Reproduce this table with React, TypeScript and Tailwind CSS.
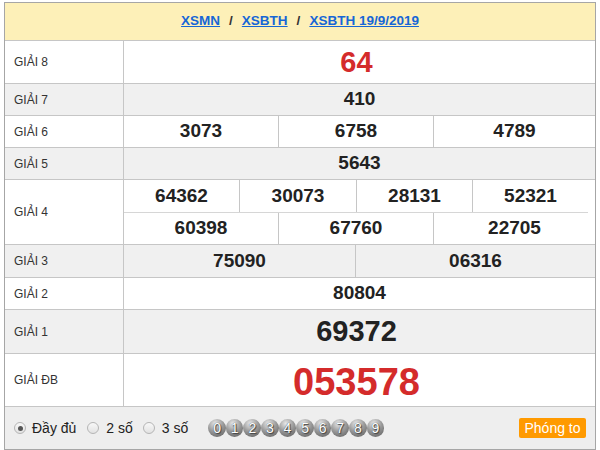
const font = "font-['Liberation_Sans',Arial,sans-serif]";

function Label({ text }: { text: string }) {
  return (
    <div className="w-[119px] shrink-0 border-r border-[#c6c6c6] pl-[9px] flex items-center text-[12px] text-[#333]">
      {text}
    </div>
  );
}

function Num({ v, className = "" }: { v: string; className?: string }) {
  return (
    <div className={`flex items-center justify-center text-[19px] font-bold text-[#222] ${className}`}>{v}</div>
  );
}

function Row({
  label,
  h,
  gray,
  children,
}: {
  label: string;
  h: string;
  gray?: boolean;
  children: React.ReactNode;
}) {
  return (
    <div className={`flex border-b border-[#c6c6c6] ${h} ${gray ? "bg-[#f0f0f0]" : "bg-white"}`}>
      <Label text={label} />
      <div className="flex-1 flex flex-col">{children}</div>
    </div>
  );
}

function Radio({ checked }: { checked?: boolean }) {
  return (
    <span className="w-[12px] h-[12px] rounded-full border border-[#b5b5b5] bg-[linear-gradient(#f8f8f8,#e2e2e2)] flex items-center justify-center">
      {checked && <span className="w-[5px] h-[5px] rounded-full bg-[#555]" />}
    </span>
  );
}

export default function App() {
  const balls = ["0", "1", "2", "3", "4", "5", "6", "7", "8", "9"];
  return (
    <div className={`${font} w-[600px] h-[450px] bg-white pt-[2px] pl-[4px]`}>
      <div className="w-[592px] border border-[#a6a6a6]">
        {/* header */}
        <div className="h-[38px] bg-[#fdf0b8] border-b border-[#c6c6c6] flex items-center justify-center text-[13.5px] font-bold">
          <a className="text-[#1766d6] underline">XSMN</a>
          <span className="mx-[9px] text-[#333]">/</span>
          <a className="text-[#1766d6] underline">XSBTH</a>
          <span className="mx-[9px] text-[#333]">/</span>
          <a className="text-[#1766d6] underline">XSBTH 19/9/2019</a>
        </div>

        <Row label="GIẢI 8" h="h-[43px]">
          <Num v="64" className="flex-1 text-[29px] text-[#d42b2b] pr-[6px]" />
        </Row>
        <Row label="GIẢI 7" h="h-[32px]" gray>
          <Num v="410" className="flex-1" />
        </Row>
        <Row label="GIẢI 6" h="h-[32px]">
          <div className="flex-1 flex">
            <Num v="3073" className="w-[155px] border-r border-[#c6c6c6]" />
            <Num v="6758" className="w-[155px] border-r border-[#c6c6c6]" />
            <Num v="4789" className="flex-1" />
          </div>
        </Row>
        <Row label="GIẢI 5" h="h-[32px]" gray>
          <Num v="5643" className="flex-1" />
        </Row>
        <Row label="GIẢI 4" h="h-[65px]">
          <div className="w-[464px] h-[33px] flex border-b border-[#d6d6d6]">
            <Num v="64362" className="w-[116px] border-r border-[#c6c6c6]" />
            <Num v="30073" className="w-[117px] border-r border-[#c6c6c6]" />
            <Num v="28131" className="w-[116px] border-r border-[#c6c6c6]" />
            <Num v="52321" className="flex-1" />
          </div>
          <div className="flex-1 flex">
            <Num v="60398" className="w-[155px] border-r border-[#c6c6c6]" />
            <Num v="67760" className="w-[155px] border-r border-[#c6c6c6]" />
            <Num v="22705" className="flex-1" />
          </div>
        </Row>
        <Row label="GIẢI 3" h="h-[33px]" gray>
          <div className="flex-1 flex">
            <Num v="75090" className="w-[232px] border-r border-[#c6c6c6]" />
            <Num v="06316" className="flex-1" />
          </div>
        </Row>
        <Row label="GIẢI 2" h="h-[32px]">
          <Num v="80804" className="flex-1" />
        </Row>
        <Row label="GIẢI 1" h="h-[44px]" gray>
          <Num v="69372" className="flex-1 text-[29px] pr-[6px]" />
        </Row>
        <Row label="GIẢI ĐB" h="h-[53px]">
          <Num v="053578" className="flex-1 text-[38px] text-[#d42b2b] pr-[6px]" />
        </Row>

        {/* footer */}
        <div className="h-[42px] bg-[#eeeeee] flex items-center pl-[9px] pr-[9px] text-[14px] text-[#222]">
          <label className="flex items-center gap-[6px]">
            <Radio checked />
            <span>Đầy đủ</span>
          </label>
          <label className="flex items-center gap-[7px] ml-[11px]">
            <Radio />
            <span>2 số</span>
          </label>
          <label className="flex items-center gap-[7px] ml-[10px]">
            <Radio />
            <span>3 số</span>
          </label>
          <div className="flex ml-[20px]">
            {balls.map((b) => (
              <span
                key={b}
                className="w-[17.6px] h-[17.6px] rounded-full bg-[radial-gradient(circle_at_40%_25%,#e8e8e8_0%,#9c9c9c_45%,#5e5e5e_95%)] flex items-center justify-center text-[14px] leading-none text-white [text-shadow:0_0_1px_#333,1px_1px_1px_#444]"
              >
                {b}
              </span>
            ))}
          </div>
          <button className="ml-auto w-[67px] h-[20px] rounded-[2px] bg-[#ff9a00] text-white text-[14px] flex items-center justify-center">
            Phóng to
          </button>
        </div>
      </div>
    </div>
  );
}
